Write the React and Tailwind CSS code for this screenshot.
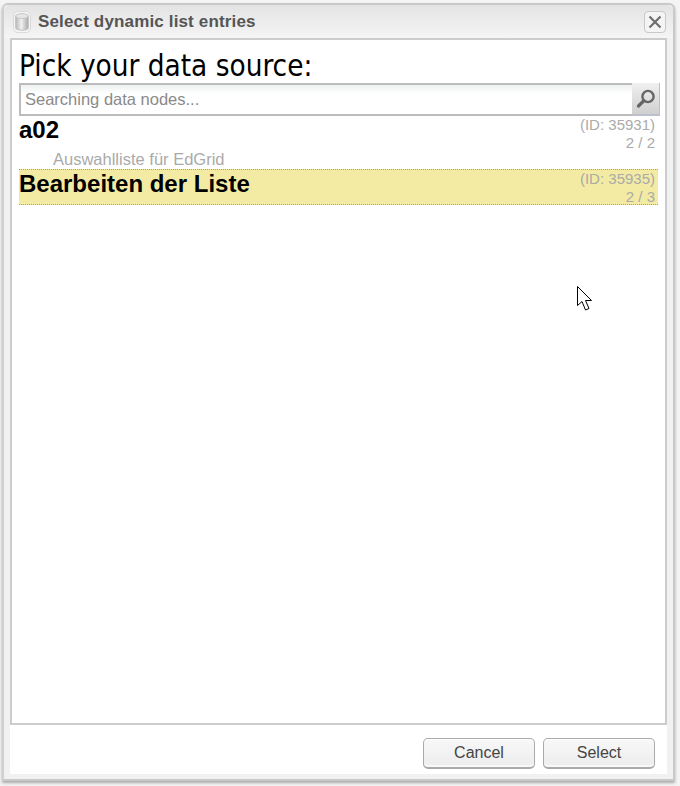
import React from 'react';

const sans = "font-['Liberation_Sans',Arial,sans-serif]";

const DbIcon = () => (
  <svg width="18" height="22" viewBox="0 0 20 24" preserveAspectRatio="none">
    <defs>
      <linearGradient id="db" x1="0" x2="1" y1="0" y2="0">
        <stop offset="0" stopColor="#b8b8b8" />
        <stop offset="0.45" stopColor="#f0f0f0" />
        <stop offset="1" stopColor="#a8a8a8" />
      </linearGradient>
    </defs>
    <rect x="0.5" y="0.5" width="19" height="23" rx="5" fill="#f4f4f4" stroke="#d6d6d6" />
    <path d="M3 5.5C3 2.8 17 2.8 17 5.5V18.5C17 21.7 3 21.7 3 18.5Z" fill="url(#db)" stroke="#bdbdbd" />
    <ellipse cx="10" cy="5.5" rx="7" ry="2.6" fill="#e6e6e6" stroke="#c4c4c4" />
  </svg>
);

const Cursor = () => (
  <svg width="16" height="26" viewBox="0 0 16 26" className="absolute left-[577px] top-[286px]">
    <path d="M0.5 0.5V19.5L5 15.5L8.5 24L12 22.5L8.5 14.5H14.5Z" fill="#ffffff" stroke="#000000" strokeWidth="1" />
  </svg>
);

const rows = [
  { name: 'a02', id: '(ID: 35931)', count: '2 / 2', desc: 'Auswahlliste für EdGrid' },
  { name: 'Bearbeiten der Liste', id: '(ID: 35935)', count: '2 / 3', active: true },
];

const App = () => {
  return (
    <div className={`relative w-[680px] h-[786px] bg-[#f4f4f4] pt-[3px] pl-[2px] ${sans}`}>
      <div className="w-[673px] h-[778px] flex flex-col bg-[#f1f1f1] rounded-t-md border-2 border-[#c9c9c9] border-l-[#cfcfcf] shadow-[0_2px_3px_#aaaaaa]">
        {/* Title bar */}
        <div className="h-[33px] shrink-0 flex items-center pl-[9px] pr-[7px] rounded-t-md bg-gradient-to-b from-[#e3e3e3] to-[#f5f5f5]">
          <DbIcon />
          <span className="ml-[7px] text-[17px] tracking-[0.15px] font-bold text-[#555555]">Select dynamic list entries</span>
          <button className="ml-auto w-[22px] h-[22px] flex items-center justify-center rounded-[4px] border border-[#c8c8c8] bg-[#f4f4f4]">
            <svg width="14" height="14" viewBox="0 0 14 14">
              <path d="M1.5 1.5L12.5 12.5M12.5 1.5L1.5 12.5" stroke="#6e6e6e" strokeWidth="2.2" />
            </svg>
          </button>
        </div>

        <div className="mx-[6px] flex-1 flex flex-col bg-white">
          {/* Content */}
          <div className="flex-1 border-2 border-[#cccccc] pl-[7px] pr-[7px]">
            <h1 className="h-[43px] pt-[7px] text-[29.4px] leading-[38px] text-black font-['DejaVu_Sans_Condensed','DejaVu_Sans',sans-serif]">Pick your data source:</h1>
            <div className="flex h-[33px] -mr-[2px] border-2 border-[#bcbcbc] border-r-0 bg-gradient-to-b from-[#eef1f1] to-white to-30%">
              <input
                readOnly
                placeholder="Searching data nodes..."
                className="flex-1 min-w-0 bg-transparent px-[4px] text-[16.5px] outline-none placeholder:text-[#8a8a8a]"
              />
              <div className="w-[28px] -mt-[2px] -mb-[2px] flex items-center justify-center bg-gradient-to-b from-[#f0f0f0] to-[#d0d0d0] border-r border-b-2 border-[#bcc0cc]">
                <svg width="24" height="24" viewBox="0 0 24 24">
                  <circle cx="14" cy="9.5" r="5.6" fill="none" stroke="#666666" strokeWidth="2.4" />
                  <path d="M9.5 14L4.5 19" stroke="#666666" strokeWidth="3.2" strokeLinecap="round" />
                </svg>
              </div>
            </div>
            {rows.map((row) => (
              <div
                key={row.name}
                className={`relative ${row.active ? 'h-[36px] bg-[#f3eba3] border-y border-dotted border-[#a9a66a]' : 'h-[53px]'}`}
              >
                <div className="text-[24px] leading-[28px] font-bold text-black">{row.name}</div>
                {row.desc && <div className="mt-[6px] pl-[34px] text-[16.5px] leading-[18px] text-[#aaaaaa]">{row.desc}</div>}
                <div className="absolute right-[3px] top-0 text-right text-[15px] leading-[18px] text-[#aaaaaa]">
                  <div>{row.id}</div>
                  <div>{row.count}</div>
                </div>
              </div>
            ))}
          </div>

          {/* Footer */}
          <div className="h-[49px] shrink-0 flex items-start justify-end gap-[8px] pt-[13px] pr-[12px]">
            <button className="w-[112px] h-[31px] rounded-[5px] border border-[#aaaaaa] border-b-2 bg-gradient-to-b from-[#f8f8f8] to-[#ececec] shadow-[inset_0_1px_0_#ffffff,inset_0_-2px_0_#f8f8f8] text-[16px] text-[#444444]">Cancel</button>
            <button className="w-[112px] h-[31px] rounded-[5px] border border-[#aaaaaa] border-b-2 bg-gradient-to-b from-[#f8f8f8] to-[#ececec] shadow-[inset_0_1px_0_#ffffff,inset_0_-2px_0_#f8f8f8] text-[16px] text-[#444444]">Select</button>
          </div>
        </div>
        <div className="h-[5px] shrink-0" />
      </div>
      <Cursor />
    </div>
  );
};

export default App;
